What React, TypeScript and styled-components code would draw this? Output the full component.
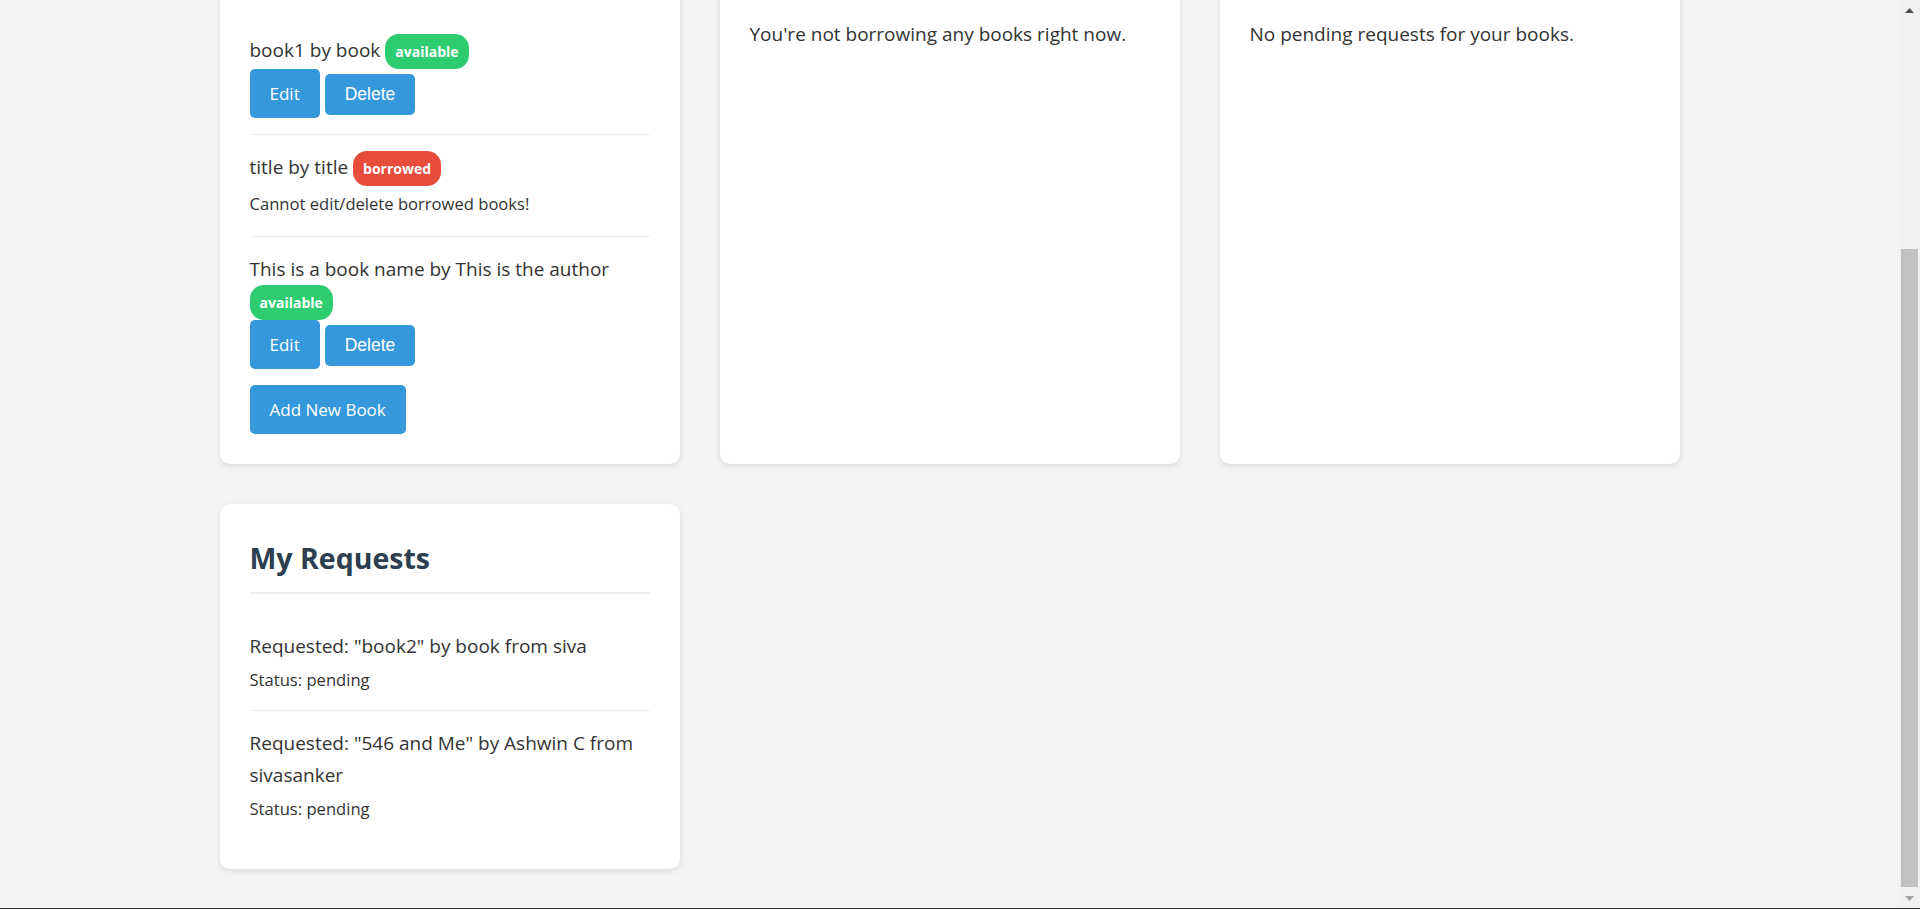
import React, { useLayoutEffect, useEffect } from "react";
import styled, { createGlobalStyle } from "styled-components";

const GlobalStyle = createGlobalStyle`
  *, *::before, *::after { box-sizing: border-box; }
  html, body { margin: 0; padding: 0; }
  body {
    padding-right: 21px;
    background: #f4f4f4;
    font-family: "Open Sans", "Noto Sans", sans-serif;
    font-size: 19px;
    line-height: 32px;
    color: #333;
  }
`;

/* Classic Windows-style scrollbar, drawn over the right edge of the page */
const ScrollRail = styled.div`
  position: fixed;
  top: 0;
  right: 0;
  bottom: 0;
  width: 21px;
  background: #f1f1f1;
  display: flex;
  flex-direction: column;
  z-index: 10;
`;

const ScrollButton = styled.div`
  flex: none;
  height: 21px;
  display: flex;
  align-items: center;
  justify-content: center;
`;

const ScrollTrack = styled.div`
  flex: 1;
  display: flex;
  flex-direction: column;
  padding: 0 2px 1px;
`;

const ScrollThumb = styled.div`
  margin-top: auto;
  height: 638px;
  background: #c1c1c1;
`;

const WindowEdge = styled.div`
  position: fixed;
  left: 0;
  right: 0;
  bottom: 0;
  height: 1px;
  background: #333;
  z-index: 11;
`;

const Nav = styled.nav`
  height: 80px;
  background: #2c3e50;
  color: #fff;
  display: flex;
  align-items: center;
  justify-content: space-between;
  padding: 0 220px;
`;

const Brand = styled.div`
  font-size: 26px;
  font-weight: 700;
`;

const NavLinks = styled.div`
  display: flex;
  gap: 24px;
  font-size: 18px;
`;

const Container = styled.main`
  max-width: 1460px;
  margin: 0 auto;
  padding: 40px 0;
`;

const PageHeader = styled.header`
  margin-bottom: 40px;
`;

const PageTitle = styled.h1`
  margin: 0 0 10px;
  font-size: 36px;
  line-height: 44px;
  color: #2c3e50;
`;

const PageLead = styled.p`
  margin: 0;
`;

const Grid = styled.div`
  display: grid;
  grid-template-columns: repeat(3, minmax(0, 1fr));
  gap: 40px;
  align-items: stretch;
`;

const Card = styled.section`
  background: #fff;
  border-radius: 10px;
  padding: 30px;
  box-shadow: 0 2px 6px rgba(0, 0, 0, 0.1);
`;

const CardTitle = styled.h2`
  margin: 0 0 20px;
  padding-bottom: 10px;
  border-bottom: 2px solid #eee;
  font-size: 28.5px;
  font-weight: 700;
  line-height: 48px;
  color: #2c3e50;
`;

const List = styled.ul`
  list-style: none;
  margin: 0;
  padding: 0;
`;

const Item = styled.li`
  padding: 16px 0;
  border-bottom: 1px solid #eee;
  &:last-child {
    border-bottom: none;
  }
`;

const TitleLine = styled.div`
  line-height: 32px;
`;

const Badge = styled.span<{ $status: "available" | "borrowed" }>`
  display: inline-block;
  padding: 5px 10px;
  border-radius: 14px;
  font-size: 14px;
  font-weight: 700;
  line-height: 25px;
  color: #fff;
  background: ${(p) => (p.$status === "available" ? "#2ecc71" : "#e74c3c")};
`;

const Note = styled.p<{ $mb?: number }>`
  margin: 4px 0 ${(p) => p.$mb ?? 0}px;
  font-size: 16.6px;
  line-height: 28px;
`;

const Actions = styled.div`
  display: flex;
  align-items: baseline;
  gap: 5px;
`;

const LinkButton = styled.a`
  display: inline-block;
  padding: 10px 20px;
  background: #3498db;
  color: #fff;
  text-decoration: none;
  border-radius: 5px;
  font-size: 17px;
  line-height: 29px;
`;

const DeleteButton = styled.button`
  padding: 10px 20px;
  border: none;
  background: #3498db;
  color: #fff;
  border-radius: 5px;
  font-family: "Liberation Sans", Arial, sans-serif;
  font-size: 17.5px;
  line-height: 21px;
`;

const CardFooter = styled.div`
  display: flex;
`;

const EmptyText = styled.p`
  margin: 0;
`;

type Book = { title: string; author: string; status: "available" | "borrowed" };

const books: Book[] = [
  { title: "book1", author: "book", status: "available" },
  { title: "title", author: "title", status: "borrowed" },
  { title: "This is a book name", author: "This is the author", status: "available" },
];

const requests = [
  { text: 'Requested: "book2" by book from siva', status: "pending" },
  { text: 'Requested: "546 and Me" by Ashwin C from sivasanker', status: "pending" },
];

function Arrow({ up, color }: { up: boolean; color: string }) {
  return (
    <svg width="9" height="5" viewBox="0 0 9 5" aria-hidden="true">
      <polygon points={up ? "0,5 4.5,0 9,5" : "0,0 4.5,5 9,0"} fill={color} />
    </svg>
  );
}

function FakeScrollbar() {
  return (
    <ScrollRail aria-hidden="true">
      <ScrollButton>
        <Arrow up color="#505050" />
      </ScrollButton>
      <ScrollTrack>
        <ScrollThumb />
      </ScrollTrack>
      <ScrollButton>
        <Arrow up={false} color="#a3a3a3" />
      </ScrollButton>
    </ScrollRail>
  );
}

export default function App() {
  useLayoutEffect(() => {
    window.scrollTo(0, document.documentElement.scrollHeight);
  }, []);
  useEffect(() => {
    const id = requestAnimationFrame(() =>
      window.scrollTo(0, document.documentElement.scrollHeight)
    );
    return () => cancelAnimationFrame(id);
  }, []);

  return (
    <>
      <GlobalStyle />
      <Nav>
        <Brand>BookShare</Brand>
        <NavLinks>
          <span>Dashboard</span>
          <span>Logout</span>
        </NavLinks>
      </Nav>
      <Container>
        <PageHeader>
          <PageTitle>Dashboard</PageTitle>
          <PageLead>Manage your books, loans and requests.</PageLead>
        </PageHeader>
        <Grid>
          <Card>
            <CardTitle>My Books</CardTitle>
            <List>
              {books.map((b) => (
                <Item key={b.title}>
                  <TitleLine>
                    {b.title} by {b.author} <Badge $status={b.status}>{b.status}</Badge>
                  </TitleLine>
                  {b.status === "available" ? (
                    <Actions>
                      <LinkButton href="#">Edit</LinkButton>
                      <DeleteButton type="button">Delete</DeleteButton>
                    </Actions>
                  ) : (
                    <Note $mb={2}>Cannot edit/delete borrowed books!</Note>
                  )}
                </Item>
              ))}
            </List>
            <CardFooter>
              <LinkButton href="#">Add New Book</LinkButton>
            </CardFooter>
          </Card>
          <Card>
            <CardTitle>Books I'm Borrowing</CardTitle>
            <EmptyText>You're not borrowing any books right now.</EmptyText>
          </Card>
          <Card>
            <CardTitle>Requests for My Books</CardTitle>
            <EmptyText>No pending requests for your books.</EmptyText>
          </Card>
          <Card>
            <CardTitle>My Requests</CardTitle>
            <List>
              {requests.map((r) => (
                <Item key={r.text}>
                  <TitleLine>{r.text}</TitleLine>
                  <Note>Status: {r.status}</Note>
                </Item>
              ))}
            </List>
          </Card>
        </Grid>
      </Container>
      <FakeScrollbar />
      <WindowEdge />
    </>
  );
}
